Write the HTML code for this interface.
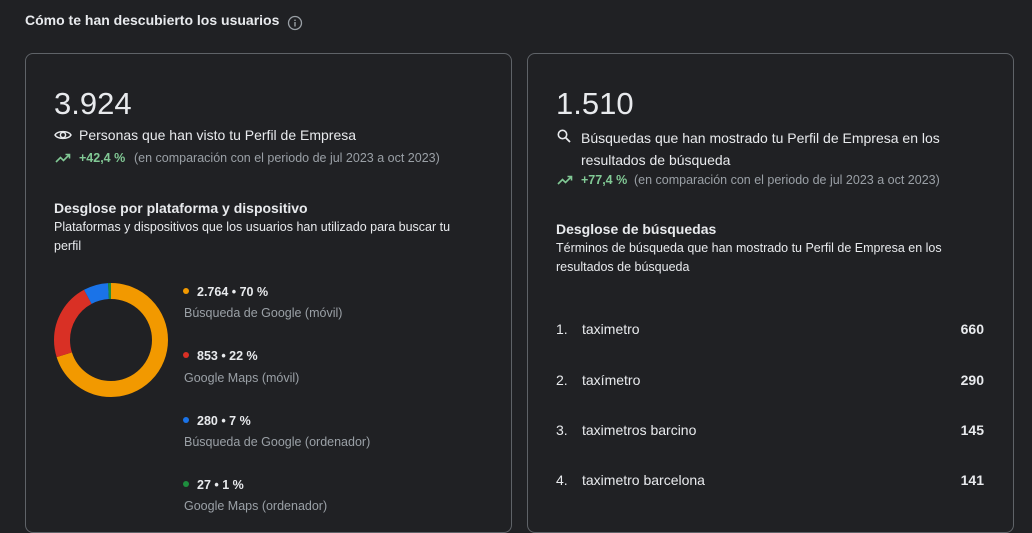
<!DOCTYPE html>
<html><head><meta charset="utf-8"><style>
*{margin:0;padding:0;box-sizing:border-box}
body{width:1032px;height:521px;background:#202124;font-family:"Liberation Sans",Arial,sans-serif;color:#e8eaed;position:relative;overflow:hidden}
.a{position:absolute;white-space:nowrap}
.card{position:absolute;top:53px;height:480px;border:1px solid #5f6368;border-radius:8px}
.big{font-size:31px;color:#e8eaed}
.lbl{font-size:14px;color:#e8eaed}
.g{font-size:12.5px;color:#81c995;font-weight:bold}
.cmp{font-size:12.5px;color:#9aa0a6}
.h{font-size:14px;font-weight:bold;color:#e8eaed}
.s{font-size:12.5px;color:#e8eaed;line-height:19px}
.v{font-size:12.5px;font-weight:bold;color:#e8eaed}
.n{font-size:12.5px;color:#9aa0a6}
.dot{display:inline-block;width:6px;height:6px;border-radius:50%;margin-right:8px;vertical-align:2px}
.t{font-size:14px;color:#e8eaed}
</style></head><body>
<div class="a" style="left:25px;top:12px;font-size:14px;font-weight:bold">Cómo te han descubierto los usuarios</div>
<svg class="a" style="left:287px;top:15px" width="16" height="16" viewBox="0 0 16 16"><circle cx="8" cy="8" r="6.5" fill="none" stroke="#9aa0a6" stroke-width="1.3"/><rect x="7.3" y="7" width="1.4" height="4.5" fill="#9aa0a6"/><rect x="7.3" y="4.6" width="1.4" height="1.4" fill="#9aa0a6"/></svg>

<div class="card" style="left:25px;width:487px"></div>
<div class="card" style="left:527px;width:487px"></div>

<div class="a big" style="left:54px;top:86px">3.924</div>
<svg class="a" style="left:54px;top:128px" width="18" height="14" viewBox="0 0 18 14"><path d="M1 7C3.5 2.5 14.5 2.5 17 7C14.5 11.5 3.5 11.5 1 7Z" fill="none" stroke="#e8eaed" stroke-width="1.5"/><circle cx="9" cy="7" r="2.6" fill="none" stroke="#e8eaed" stroke-width="1.5"/></svg>
<div class="a lbl" style="left:79px;top:127px">Personas que han visto tu Perfil de Empresa</div>
<svg class="a" style="left:55px;top:153px" width="16" height="10" viewBox="0 0 16 10"><path d="M1 9L5.5 4.5L8.5 7.5L14 2M10.5 1.5H14.5V5.5" fill="none" stroke="#81c995" stroke-width="1.6"/></svg>
<div class="a g" style="left:79px;top:151px">+42,4 %</div>
<div class="a cmp" style="left:134px;top:151px">(en comparación con el periodo de jul 2023 a oct 2023)</div>
<div class="a h" style="left:54px;top:200px">Desglose por plataforma y dispositivo</div>
<div class="a s" style="left:54px;top:218px">Plataformas y dispositivos que los usuarios han utilizado para buscar tu<br>perfil</div>

<svg class="a" style="left:54px;top:283px" width="114" height="114" viewBox="0 0 114 114">
<g transform="rotate(-90 57 57)" fill="none" stroke-width="16">
<circle cx="57" cy="57" r="49" stroke="#f29900" stroke-dasharray="215.5 400"/>
<circle cx="57" cy="57" r="49" stroke="#d93025" stroke-dasharray="0 215.5 67.7 400"/>
<circle cx="57" cy="57" r="49" stroke="#1a73e8" stroke-dasharray="0 283.2 21.6 400"/>
<circle cx="57" cy="57" r="49" stroke="#1e8e3e" stroke-dasharray="0 304.8 3.1 400"/>
</g></svg>

<div class="a v" style="left:183px;top:285px"><span class="dot" style="background:#f29900"></span>2.764 • 70 %</div>
<div class="a n" style="left:184px;top:306px">Búsqueda de Google (móvil)</div>
<div class="a v" style="left:183px;top:349px"><span class="dot" style="background:#d93025"></span>853 • 22 %</div>
<div class="a n" style="left:184px;top:371px">Google Maps (móvil)</div>
<div class="a v" style="left:183px;top:414px"><span class="dot" style="background:#1a73e8"></span>280 • 7 %</div>
<div class="a n" style="left:184px;top:435px">Búsqueda de Google (ordenador)</div>
<div class="a v" style="left:183px;top:478px"><span class="dot" style="background:#1e8e3e"></span>27 • 1 %</div>
<div class="a n" style="left:184px;top:499px">Google Maps (ordenador)</div>

<div class="a big" style="left:556px;top:86px">1.510</div>
<svg class="a" style="left:557px;top:129px" width="14" height="14" viewBox="0 0 14 14"><circle cx="5.5" cy="5.5" r="4.2" fill="none" stroke="#e8eaed" stroke-width="1.6"/><path d="M8.6 8.6L13 13" stroke="#e8eaed" stroke-width="1.8"/></svg>
<div class="a lbl" style="left:581px;top:127px;line-height:22px">Búsquedas que han mostrado tu Perfil de Empresa en los<br>resultados de búsqueda</div>
<svg class="a" style="left:557px;top:175px" width="16" height="10" viewBox="0 0 16 10"><path d="M1 9L5.5 4.5L8.5 7.5L14 2M10.5 1.5H14.5V5.5" fill="none" stroke="#81c995" stroke-width="1.6"/></svg>
<div class="a g" style="left:581px;top:173px">+77,4 %</div>
<div class="a cmp" style="left:634px;top:173px">(en comparación con el periodo de jul 2023 a oct 2023)</div>
<div class="a h" style="left:556px;top:221px">Desglose de búsquedas</div>
<div class="a s" style="left:556px;top:239px">Términos de búsqueda que han mostrado tu Perfil de Empresa en los<br>resultados de búsqueda</div>

<div class="a t" style="left:556px;top:321px">1.</div><div class="a t" style="left:582px;top:321px">taximetro</div><div class="a t" style="right:48px;top:321px;font-weight:bold">660</div>
<div class="a t" style="left:556px;top:372px">2.</div><div class="a t" style="left:582px;top:372px">taxímetro</div><div class="a t" style="right:48px;top:372px;font-weight:bold">290</div>
<div class="a t" style="left:556px;top:422px">3.</div><div class="a t" style="left:582px;top:422px">taximetros barcino</div><div class="a t" style="right:48px;top:422px;font-weight:bold">145</div>
<div class="a t" style="left:556px;top:472px">4.</div><div class="a t" style="left:582px;top:472px">taximetro barcelona</div><div class="a t" style="right:48px;top:472px;font-weight:bold">141</div>
</body></html>
